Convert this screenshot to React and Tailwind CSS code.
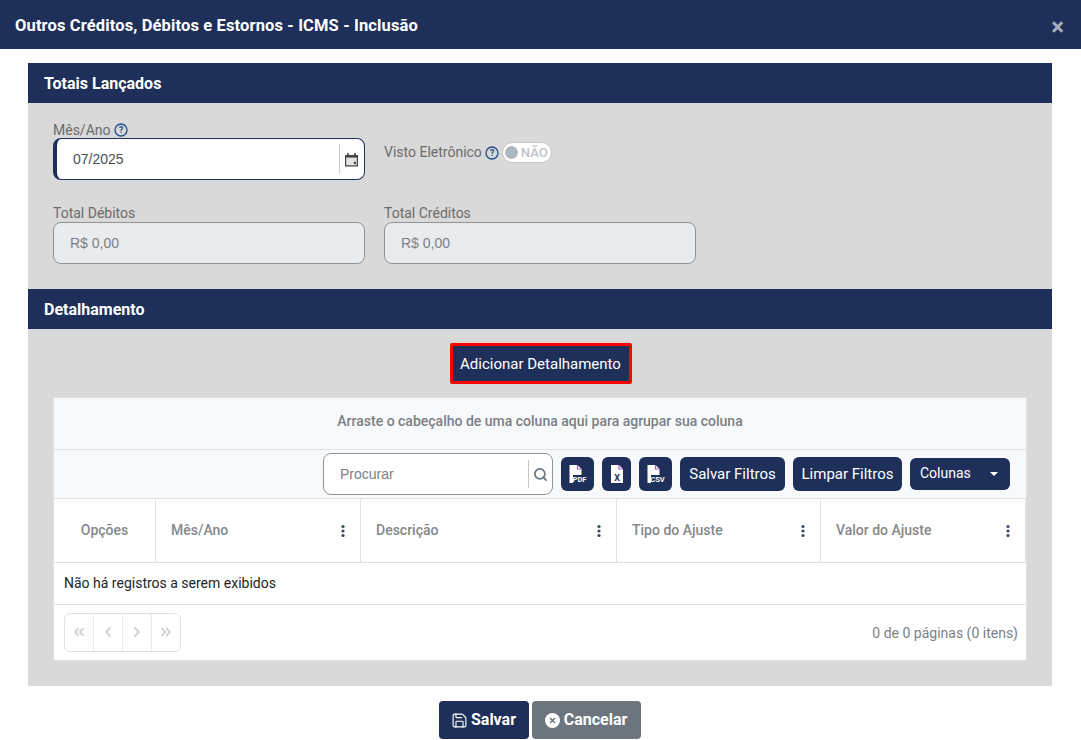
import { Save, Search, ChevronsLeft, ChevronLeft, ChevronRight, ChevronsRight } from "lucide-react";

const navy = "bg-[#1e3059]";

function HelpIcon() {
  return (
    <svg width="14" height="14" viewBox="0 0 14 14" className="shrink-0">
      <circle cx="7" cy="7" r="6" fill="none" stroke="#1f4e8c" strokeWidth="1.3" />
      <text x="7" y="10" textAnchor="middle" fontSize="8.5" fontWeight="700" fill="#1f4e8c" fontFamily="Roboto">?</text>
    </svg>
  );
}

function CalendarIcon() {
  return (
    <svg width="15" height="15" viewBox="0 0 15 15">
      <path d="M1.6 3.5h11.8v10.4H1.6z" fill="#e4e4e4" stroke="#444" strokeWidth="1.2" />
      <path d="M1 3h13v2.6H1z" fill="#444" />
      <path d="M4 1v2.5M11 1v2.5" stroke="#444" strokeWidth="1.6" />
      <rect x="9.8" y="9.8" width="2.2" height="2.2" fill="#444" />
    </svg>
  );
}

function FileIcon({ label }) {
  const wide = label.length > 1;
  const left = wide ? 2.5 : 5;
  return (
    <svg width="22" height="20" viewBox="0 0 22 20">
      <path d={`M${left} 1h8l4 4v14h-12z`} fill="#fff" />
      <path d={`M${left + 8} 1v4h4`} fill="none" stroke="#a855c7" strokeWidth="1.1" />
      {wide && <rect x="6" y="11" width="13" height="8" fill="#1e3059" />}
      <text x={wide ? 12.5 : 11} y={wide ? 17.8 : 16.5} textAnchor="middle" fontSize={wide ? 7.5 : 9} fontWeight="700" fill={wide ? "#fff" : "#1e3059"} fontFamily="Roboto">{label}</text>
    </svg>
  );
}

function Dots() {
  return (
    <svg width="4" height="14" viewBox="0 0 4 14">
      <circle cx="2" cy="2.5" r="1.6" fill="#3a4a66" />
      <circle cx="2" cy="7" r="1.6" fill="#3a4a66" />
      <circle cx="2" cy="11.5" r="1.6" fill="#3a4a66" />
    </svg>
  );
}

function SectionBar({ title }) {
  return (
    <div className={`${navy} h-10 flex items-center pl-4 pt-[2px] text-white font-bold text-[16px]`}>{title}</div>
  );
}

function Field({ label, value }) {
  return (
    <div className="w-[312px]">
      <div className="text-[14px] leading-[17px] text-[#6b6b6b]">{label}</div>
      <div className="h-[42px] rounded-lg border border-[#8f9396] bg-[#e9ecef] flex items-center pl-4 font-['Liberation_Sans',sans-serif] text-[14px] text-[#7a8086]">{value}</div>
    </div>
  );
}

function HeadCell({ title, className }) {
  return (
    <div className={`${className} border-r border-[#dee2e6] flex items-center justify-between pl-[15px] pr-[15px] font-medium text-[14px] text-[#85888c]`}>
      <span>{title}</span>
      <Dots />
    </div>
  );
}

export default function App() {
  return (
    <div className="w-[1081px] h-[740px] overflow-hidden bg-white font-['Roboto',sans-serif]">
      <div className={`${navy} h-[49px] flex items-center justify-between pl-[15px] pr-[17px] pt-[4px]`}>
        <span className="text-white font-bold text-[16.5px] tracking-[0.13px]">Outros Créditos, Débitos e Estornos - ICMS - Inclusão</span>
        <span className="text-[#a7aebd] font-bold text-[24px] leading-none">×</span>
      </div>

      <div className="mx-[28px] mt-[14px] w-[1024px]">
        <SectionBar title="Totais Lançados" />
        <div className="bg-[#d9d9d9] h-[186px] pl-[25px] pt-[19px]">
          <div className="flex gap-[19px]">
            <div className="w-[312px]">
              <div className="flex items-center gap-[3px] h-4 text-[14px] text-[#6b6b6b]">
                Mês/Ano <HelpIcon />
              </div>
              <div className="h-[42px] bg-white rounded-lg border border-[#1e3059] border-l-4 flex items-center pl-4 pr-[5px] font-['Liberation_Sans',sans-serif] text-[14px] text-[#495057]">
                <span className="flex-1">07/2025</span>
                <div className="border-l border-[#c8c8c8] h-[30px] pl-[4px] flex items-center"><CalendarIcon /></div>
              </div>
            </div>
            <div className="flex items-start gap-[3px] pt-[20px] text-[14px] text-[#6b6b6b]">
              <span className="leading-[20px]">Visto Eletrônico</span>
              <span className="mt-[4px]"><HelpIcon /></span>
              <div className="w-[50px] h-[21px] rounded-full bg-white border border-[#c4c4c4] flex items-center pl-[2px] gap-[3px]">
                <span className="w-[13px] h-[13px] rounded-full bg-[#adb5bd]"></span>
                <span className="text-[13px] font-medium text-[#c0c4c9]">NÃO</span>
              </div>
            </div>
          </div>
          <div className="flex gap-[19px] mt-[25px]">
            <Field label="Total Débitos" value="R$ 0,00" />
            <Field label="Total Créditos" value="R$ 0,00" />
          </div>
        </div>

        <SectionBar title="Detalhamento" />
        <div className="bg-[#d9d9d9] h-[357px] pt-[14px] px-[25px]">
          <div className="flex justify-center pl-[1px]">
            <button className={`${navy} h-[41px] w-[182px] border-[3px] border-[#ff0000] rounded-[2px] text-white text-[15px] pt-[1px]`}>Adicionar Detalhamento</button>
          </div>
          <div className="mt-[13px] w-[974px] h-[264px] bg-white border border-[#dee2e6] flex flex-col">
            <div className="h-[52px] bg-[#f8f9fa] border-b border-[#dee2e6] flex items-center justify-center pb-[4px] font-medium text-[14px] text-[#7b7f84]">
              Arraste o cabeçalho de uma coluna aqui para agrupar sua coluna
            </div>
            <div className="h-[49px] bg-[#f8f9fa] border-b border-[#dee2e6] flex items-center justify-end pr-[16px]">
              <div className="w-[230px] h-[42px] bg-white border border-[#8f9396] rounded-lg flex items-center mr-[8px] pl-4 font-['Liberation_Sans',sans-serif] text-[14px] text-[#7a8086]">
                <span className="flex-1">Procurar</span>
                <div className="border-l border-[#c8c8c8] h-[28px] w-[24px] flex items-center justify-center"><Search size={15} strokeWidth={2.8} className="text-[#6c757d]" /></div>
              </div>
              <div className="flex items-center gap-2">
                <button className={`${navy} w-[33px] h-[34px] rounded-md flex items-center justify-center`}><FileIcon label="PDF" /></button>
                <button className={`${navy} w-[29px] h-[34px] rounded-md flex items-center justify-center`}><FileIcon label="X" /></button>
                <button className={`${navy} w-[33px] h-[34px] rounded-md flex items-center justify-center`}><FileIcon label="CSV" /></button>
                <button className={`${navy} w-[105px] h-[34px] rounded-md text-white text-[15px]`}>Salvar Filtros</button>
                <button className={`${navy} w-[109px] h-[34px] rounded-md text-white text-[15px]`}>Limpar Filtros</button>
                <button className={`${navy} w-[100px] h-[32px] rounded-md text-white text-[14px] flex items-center justify-between pl-[10px] pr-[12px] pb-[1px]`}>
                  Colunas
                  <span className="w-0 h-0 border-x-[4px] border-x-transparent border-t-[4px] border-t-white"></span>
                </button>
              </div>
            </div>
            <div className="h-[64px] border-b border-[#dee2e6] flex">
              <div className="w-[102px] border-r border-[#dee2e6] flex items-center justify-center font-medium text-[14px] text-[#85888c]">Opções</div>
              <HeadCell title="Mês/Ano" className="w-[205px]" />
              <HeadCell title="Descrição" className="w-[256px]" />
              <HeadCell title="Tipo do Ajuste" className="w-[204px]" />
              <HeadCell title="Valor do Ajuste" className="w-[205px]" />
            </div>
            <div className="h-[42px] border-b border-[#dee2e6] flex items-center pl-[10px] text-[14px] text-[#212529]">Não há registros a serem exibidos</div>
            <div className="flex-1 flex items-center justify-between pl-[10px] pr-[8px] pb-[1px]">
              <div className="flex h-[39px] w-[117px] border border-[#dee2e6] rounded-md text-[#cfd2d5]">
                <div className="flex-1 border-r border-[#e9ecef] flex items-center justify-center"><ChevronsLeft size={16} strokeWidth={2.8} /></div>
                <div className="flex-1 border-r border-[#e9ecef] flex items-center justify-center"><ChevronLeft size={16} strokeWidth={2.8} /></div>
                <div className="flex-1 border-r border-[#e9ecef] flex items-center justify-center"><ChevronRight size={16} strokeWidth={2.8} /></div>
                <div className="flex-1 flex items-center justify-center"><ChevronsRight size={16} strokeWidth={2.8} /></div>
              </div>
              <span className="text-[14px] text-[#7b7f84] pt-[2px]">0 de 0 páginas (0 itens)</span>
            </div>
          </div>
        </div>
      </div>

      <div className="flex justify-center gap-[3px] mt-[15px] pr-[2px]">
        <button className={`${navy} w-[90px] h-[38px] rounded-[4px] text-white font-bold text-[16px] flex items-center justify-center gap-[3px]`}>
          <Save size={17} strokeWidth={1.6} />Salvar
        </button>
        <button className="bg-[#6c757d] w-[109px] h-[38px] rounded-[4px] text-white font-bold text-[16px] flex items-center justify-center gap-[4px]">
          <svg width="15" height="15" viewBox="0 0 15 15">
            <circle cx="7.5" cy="7.5" r="7.5" fill="#fff" />
            <path d="M5 5l5 5M10 5l-5 5" stroke="#6c757d" strokeWidth="1.5" />
          </svg>
          Cancelar
        </button>
      </div>
    </div>
  );
}
